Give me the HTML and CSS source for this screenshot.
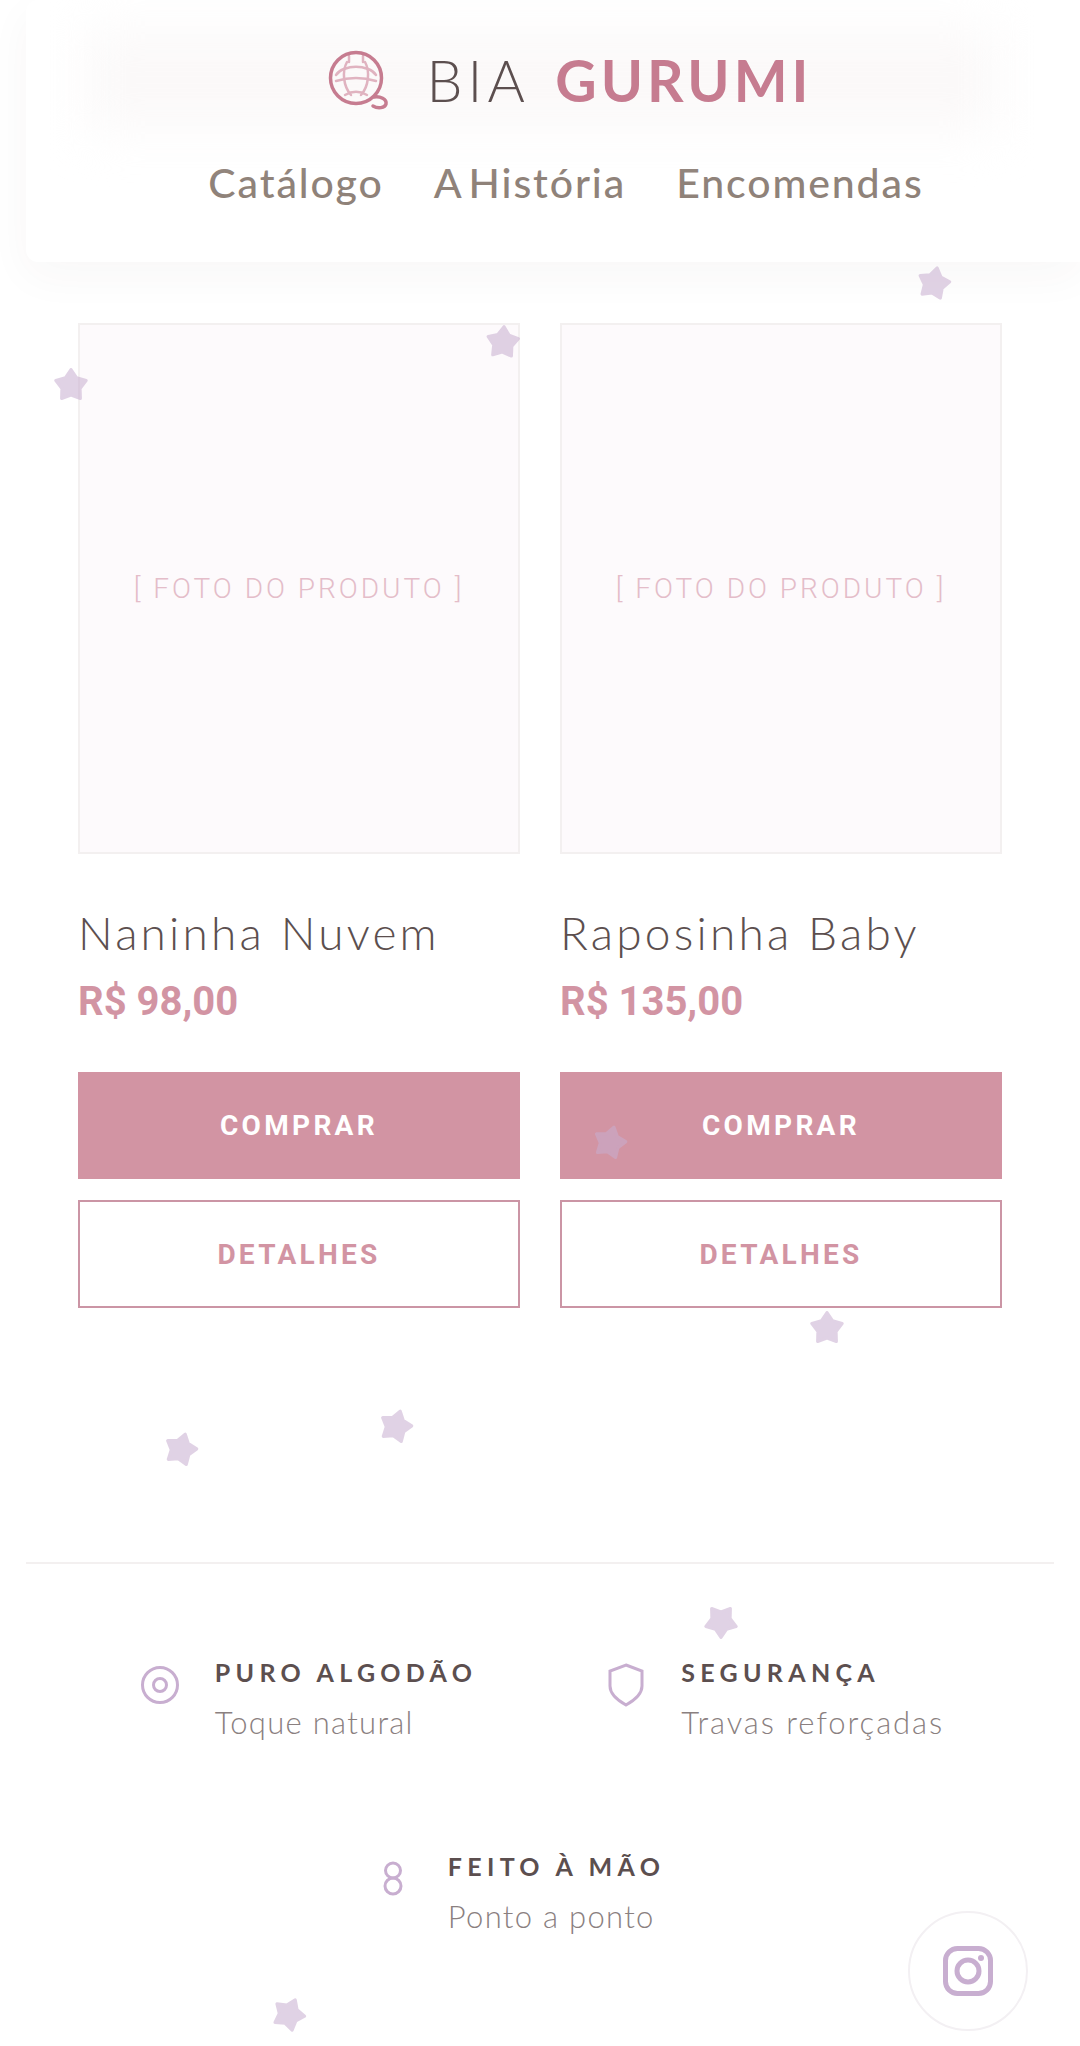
FILE: index.html
```html
<!DOCTYPE html>
<html lang="pt-BR">
<head>
    <meta charset="UTF-8">
    <meta name="viewport" content="width=device-width, initial-scale=1.0">
    <title>Bia Gurumi</title>
    <link rel="stylesheet" href="styles.css">
</head>
<body>
    <header class="site-header">
        <div class="logo">
            <svg class="logo-icon" viewBox="0 0 70 70" width="70" height="70" fill="none">
                <g stroke="#e0b3c0" stroke-width="2.500" stroke-linecap="round">
                    <path d="M21 17c-5 9-4 24 4 33"/>
                    <path d="M39 17c5 9 4 24-4 33"/>
                    <path d="M18 24c8-3 16-3 24 0"/>
                    <path d="M10 30c2-3 5-5 8-6M50 30c-2-3-5-5-8-6"/>
                    <path d="M10 36c13-4 27-4 40 0"/>
                    <path d="M19 50c7-4 15-4 22 0"/>
                    <path d="M23 11v6M37 11v6"/>
                </g>
                <circle cx="30" cy="33" r="25.500" stroke="#c67c90" stroke-width="3.500"/>
                <path d="M48 52c6-1 13 2 12 7-1 4-8 5-13 2" stroke="#c67c90" stroke-width="3.500" stroke-linecap="round"/>
            </svg>
            <span class="logo-text">BIA <strong>GURUMI</strong></span>
        </div>
        <nav class="main-nav">
            <a href="#">Catálogo</a>
            <a href="#">A História</a>
            <a href="#">Encomendas</a>
        </nav>
    </header>

    <main class="products">
        <article class="product">
            <div class="product-photo">[ FOTO DO PRODUTO ]</div>
            <h2 class="product-name">Naninha Nuvem</h2>
            <p class="product-price">R$ 98,00</p>
            <a class="btn btn-buy" href="#">COMPRAR</a>
            <a class="btn btn-details" href="#">DETALHES</a>
        </article>
        <article class="product">
            <div class="product-photo">[ FOTO DO PRODUTO ]</div>
            <h2 class="product-name">Raposinha Baby</h2>
            <p class="product-price">R$ 135,00</p>
            <a class="btn btn-buy" href="#">COMPRAR</a>
            <a class="btn btn-details" href="#">DETALHES</a>
        </article>
    </main>

    <section class="features">
        <div class="feature feature-cotton">
            <svg class="feature-icon" viewBox="0 0 48 48" width="48" height="48" fill="none">
                <circle cx="24" cy="24" r="17.500"/>
                <circle cx="24" cy="24" r="6.500"/>
            </svg>
            <div>
                <h3>PURO ALGODÃO</h3>
                <p>Toque natural</p>
            </div>
        </div>
        <div class="feature feature-safety">
            <svg class="feature-icon" viewBox="0 0 48 48" width="48" height="48" fill="none">
                <path d="M24 4l16 6v15c0 8-7 14-16 19C15 39 8 33 8 25V10z"/>
            </svg>
            <div>
                <h3>SEGURANÇA</h3>
                <p>Travas reforçadas</p>
            </div>
        </div>
        <div class="feature feature-hand">
            <svg class="feature-icon" viewBox="0 0 48 48" width="48" height="48" fill="none">
                <circle cx="24" cy="15.500" r="7.500"/>
                <circle cx="24" cy="31" r="8"/>
            </svg>
            <div>
                <h3>FEITO À MÃO</h3>
                <p>Ponto a ponto</p>
            </div>
        </div>
    </section>

    <!-- estrelinhas soltas por cima da pagina -->
    <svg class="star star-1" viewBox="0 0 34 34"><use href="#star"/></svg>
    <svg class="star star-2" viewBox="0 0 34 34"><use href="#star"/></svg>
    <svg class="star star-3" viewBox="0 0 34 34"><use href="#star"/></svg>
    <svg class="star star-4" viewBox="0 0 34 34"><use href="#star"/></svg>
    <svg class="star star-5" viewBox="0 0 34 34"><use href="#star"/></svg>
    <svg class="star star-6" viewBox="0 0 34 34"><use href="#star"/></svg>
    <svg class="star star-7" viewBox="0 0 34 34"><use href="#star"/></svg>
    <svg class="star star-8" viewBox="0 0 34 34"><use href="#star"/></svg>
    <svg class="star star-9" viewBox="0 0 34 34"><use href="#star"/></svg>

    <a class="insta-btn" href="#" aria-label="Instagram">
        <svg viewBox="0 0 50 50" width="50" height="50" fill="none">
            <rect x="2.500" y="2.500" width="45" height="45" rx="12" stroke="#c8aed0" stroke-width="5"/>
            <circle cx="25" cy="25" r="11" stroke="#c8aed0" stroke-width="5"/>
            <circle cx="38" cy="12" r="3" fill="#c8aed0"/>
        </svg>
    </a>

    <svg class="sprite" width="0" height="0">
        <defs>
            <polygon id="star" points="17,2.500 22.290,10.220 31.270,12.860 25.560,20.280 25.820,29.640 17,26.500 8.180,29.640 8.440,20.280 2.730,12.860 11.710,10.220"/>
        </defs>
    </svg>
</body>
</html>
```

FILE: styles.css
```css
/* General */
body {
    font-family: 'Lato', sans-serif;
    background-color: #fff;
    color: #5c4f4f;
    margin: 0;
    padding: 0;
    height: 2046px;
    position: relative;
    overflow: hidden;
}

a {
    text-decoration: none;
}

.sprite {
    display: block;
}

/* Header */
.site-header {
    margin-left: 26px;
    height: 262px;
    padding: 42px 0 0 26px;
    box-sizing: border-box;
    background: #fff;
    box-shadow: 0 14px 44px rgba(80, 50, 50, 0.04);
    border-radius: 12px 0 0 12px;
}

.logo {
    display: flex;
    justify-content: center;
    align-items: center;
    gap: 31px;
    height: 76px;
    padding-left: 6px;
    position: relative;
}

.logo::before {
    content: "";
    position: absolute;
    left: 36px;
    right: 84px;
    top: -12px;
    bottom: -12px;
    background: #fbf9f9;
    filter: blur(24px);
}

.logo-icon,
.logo-text {
    position: relative;
}

.logo-text {
    font-size: 57px;
    font-weight: 300;
    letter-spacing: 5px;
    color: #5c4f4f;
    line-height: 1;
    white-space: pre;
}

.logo-text strong {
    font-weight: 700;
    color: #c67c90;
    letter-spacing: 4px;
    margin-left: 7px;
}

.main-nav {
    display: flex;
    justify-content: center;
    gap: 50px;
    margin-top: 39px;
}

.main-nav a {
    font-size: 41px;
    font-weight: 500;
    letter-spacing: 1.900px;
    word-spacing: -6px;
    color: #8f8279;
    line-height: 52px;
}

/* Products */
.products {
    display: grid;
    grid-template-columns: 442px 442px;
    gap: 40px;
    padding: 61px 78px 0;
}

.product-photo {
    height: 531px;
    box-sizing: border-box;
    border: 2px solid #f3f0f0;
    background: #fdfafc;
    display: flex;
    align-items: center;
    justify-content: center;
    font-family: 'Roboto', sans-serif;
    font-weight: 300;
    font-size: 28px;
    letter-spacing: 3px;
    color: #e4bdc9;
}

.product-name {
    margin: 49px 0 0;
    font-size: 46px;
    line-height: 60px;
    font-weight: 300;
    letter-spacing: 3.200px;
    color: #5c4f4f;
}

.product-price {
    margin: 9px 0 0;
    font-family: 'Roboto', sans-serif;
    font-size: 40px;
    line-height: 60px;
    font-weight: 700;
    color: #d294a3;
}

.btn {
    display: flex;
    align-items: center;
    justify-content: center;
    box-sizing: border-box;
    height: 107px;
    font-family: 'Roboto', sans-serif;
    font-size: 28px;
    font-weight: 700;
    letter-spacing: 3.300px;
}

.btn-buy {
    margin-top: 40px;
    background: #d294a3;
    color: #fff;
}

.btn-details {
    margin-top: 21px;
    height: 108px;
    border: 2px solid #cb95a5;
    color: #d294a3;
}

/* Features */
.features {
    margin: 254px 26px 0;
    border-top: 2px solid #f3f0f0;
    padding-top: 86px;
    display: flex;
    flex-wrap: wrap;
    justify-content: center;
    column-gap: 125px;
    row-gap: 100px;
}

.feature {
    display: flex;
    gap: 31px;
}

.feature-icon {
    margin-top: 11px;
    flex: none;
}

.feature-icon * {
    stroke: #c8aed0;
    stroke-width: 3;
}

.feature h3 {
    margin: 0;
    font-size: 25px;
    line-height: 44px;
    font-weight: 700;
    letter-spacing: 5.300px;
    color: #5c4f4f;
}

.feature p {
    margin: 6px 0 0;
    font-size: 31px;
    line-height: 44px;
    font-weight: 300;
    letter-spacing: 1.300px;
    color: #8a8080;
}

.feature-safety p {
    letter-spacing: 1.950px;
}

.feature-hand {
    flex-basis: 100%;
    justify-content: center;
    padding-right: 46px;
    box-sizing: border-box;
}

/* Stars */
.star {
    position: absolute;
    width: 36px;
    height: 36px;
    fill: #c8aed0;
    stroke: #c8aed0;
    stroke-width: 3;
    stroke-linejoin: round;
    opacity: 0.55;
}

.star-1 { left: 916px; top: 265px; transform: rotate(12deg); }
.star-2 { left: 485px; top: 324px; transform: rotate(4deg); }
.star-3 { left: 53px; top: 367px; }
.star-4 { left: 592px; top: 1124px; transform: rotate(15deg); }
.star-5 { left: 809px; top: 1310px; }
.star-6 { left: 163px; top: 1431px; transform: rotate(16deg); }
.star-7 { left: 378px; top: 1408px; transform: rotate(16deg); }
.star-8 { left: 703px; top: 1604px; transform: rotate(180deg); }
.star-9 { left: 271px; top: 1996px; transform: rotate(24deg); }

/* Instagram */
.insta-btn {
    position: absolute;
    left: 908px;
    top: 1911px;
    width: 120px;
    height: 120px;
    box-sizing: border-box;
    border: 2px solid #f3f0f3;
    border-radius: 50%;
    background: #fff;
    display: flex;
    align-items: center;
    justify-content: center;
}
```
